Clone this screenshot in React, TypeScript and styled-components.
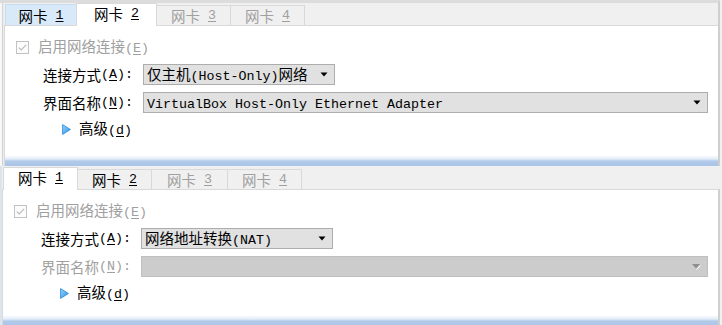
import React from "react";
import styled, { createGlobalStyle, css } from "styled-components";

const Global = createGlobalStyle`
  html, body { margin: 0; padding: 0; background: #f0f0f0; }
  body {
    width: 722px; height: 325px; overflow: hidden;
    font-family: "Noto Sans CJK SC", "Liberation Sans", sans-serif;
    font-size: 14.5px; color: #000;
  }
`;

type TabState = "selected" | "hover" | "normal" | "disabled";

interface TabData { label: string; width: number; state: TabState; }
interface PanelData {
  first: boolean;
  tabs: TabData[];
  mode: string;
  iface: string | null;
  paneHeight: number;
}

const panels: PanelData[] = [
  {
    first: true,
    tabs: [
      { label: "网卡 &1", width: 72, state: "hover" },
      { label: "网卡 &2", width: 81, state: "selected" },
      { label: "网卡 &3", width: 75, state: "disabled" },
      { label: "网卡 &4", width: 75, state: "disabled" },
    ],
    mode: "仅主机(Host-Only)网络",
    iface: "VirtualBox Host-Only Ethernet Adapter",
    paneHeight: 141,
  },
  {
    first: false,
    tabs: [
      { label: "网卡 &1", width: 75, state: "selected" },
      { label: "网卡 &2", width: 75, state: "normal" },
      { label: "网卡 &3", width: 77, state: "disabled" },
      { label: "网卡 &4", width: 75, state: "disabled" },
    ],
    mode: "网络地址转换(NAT)",
    iface: null,
    paneHeight: 137,
  },
];

const Screen = styled.div`
  display: flex;
  flex-direction: column;
  width: 722px;
  height: 325px;
  overflow: hidden;
  background: #f0f0f0;
`;

const Frame = styled.section<{ $first: boolean }>`
  display: flex;
  flex-direction: column;
  flex: none;
  box-sizing: border-box;
  width: 720px;
  ${(p) =>
    p.$first
      ? css`
          border-top: 3px solid #dcdcdc;
          border-right: 2px solid #cfcfcf;
          background: linear-gradient(to right, #f7f7f7 0 2px, #d3d3d3 2px 3px, #ececec 3px 4px, #f0f0f0 4px);
        `
      : css`
          padding-top: 1px;
          background: linear-gradient(to right, #dbe5ef 0 2px, #f0f0f0 2px);
        `}
`;

const TabBar = styled.div<{ $first: boolean }>`
  display: flex;
  align-items: flex-end;
  height: 22px;
  margin-left: ${(p) => (p.$first ? 5 : 3)}px;
`;

const Tab = styled.div<{ $state: TabState; $w: number }>`
  box-sizing: border-box;
  display: flex;
  align-items: center;
  justify-content: center;
  width: ${(p) => p.$w}px;
  height: 20px;
  margin-left: -1px;
  padding-top: 1px;
  border: 1px solid #d9d9d9;
  border-bottom: none;
  background: #f0f0f0;
  color: #000;
  line-height: 18px;
  white-space: pre;
  &:first-child { margin-left: 0; }
  ${(p) =>
    p.$state === "selected" &&
    css`
      position: relative;
      z-index: 1;
      height: 23px;
      margin-bottom: -1px;
      padding-top: 0;
      padding-bottom: 2px;
      background: #fff;
    `}
  ${(p) =>
    p.$state === "hover" &&
    css`
      height: 21px;
      background: #d8eaf9;
      border-color: #c6dcf0;
    `}
  ${(p) => p.$state === "disabled" && css`color: #a0a0a0;`}
`;

const Pane = styled.div<{ $first: boolean; $h: number }>`
  box-sizing: border-box;
  height: ${(p) => p.$h}px;
  flex: none;
  margin-left: ${(p) => (p.$first ? 4 : 2)}px;
  border-top: 1px solid #d9d9d9;
  border-left: 1px solid #d9d9d9;
  border-right: ${(p) => (p.$first ? "none" : "2px solid #d0d0d0")};
  padding-top: 11px;
  display: flex;
  flex-direction: column;
  background: linear-gradient(
    to bottom,
    #ffffff 0,
    #ffffff calc(100% - 11px),
    #e3ecf8 calc(100% - 7px),
    #b3cbea calc(100% - 5px),
    #a9c4e7 100%
  );
`;

const CheckRow = styled.label`
  display: flex;
  align-items: center;
  gap: 9px;
  height: 20px;
  margin-left: 11px;
  color: #a0a0a0;
  line-height: 20px;
`;

const Fields = styled.div`
  display: grid;
  grid-template-columns: 100px 1fr;
  grid-auto-rows: 21px;
  row-gap: 7px;
  margin: 7px 10px 0 38px;
  align-items: center;
`;

const FieldLabel = styled.span<{ $disabled?: boolean }>`
  display: flex;
  align-items: center;
  height: 21px;
  overflow: hidden;
  color: ${(p) => (p.$disabled ? "#a0a0a0" : "#000")};
  white-space: pre;
  line-height: 21px;
`;

const Combo = styled.div<{ $disabled?: boolean; $narrow?: boolean }>`
  box-sizing: border-box;
  display: flex;
  align-items: center;
  justify-content: space-between;
  height: 21px;
  overflow: hidden;
  width: ${(p) => (p.$narrow ? "192px" : "auto")};
  padding: 0 6px 0 3px;
  border: 1px solid ${(p) => (p.$disabled ? "#bfbfbf" : "#adadad")};
  background: ${(p) => (p.$disabled ? "#cccccc" : "#e1e1e1")};
  line-height: 19px;
  white-space: pre;
`;

const AdvRow = styled.div`
  display: flex;
  align-items: center;
  gap: 8px;
  height: 18px;
  margin: 7px 0 0 57px;
  line-height: 18px;
`;

const Latin = styled.span`
  font-family: "Liberation Mono", "DejaVu Sans Mono", monospace;
  font-size: 13.33px;
  white-space: pre;
`;

const Key = styled.span`
  text-decoration: underline;
  text-underline-offset: 2px;
`;

function mnemonic(run: string): React.ReactNode {
  const i = run.indexOf("&");
  if (i < 0) return run;
  return (
    <>
      {run.slice(0, i)}
      <Key>{run.charAt(i + 1)}</Key>
      {run.slice(i + 2)}
    </>
  );
}

function Mixed({ text }: { text: string }) {
  const runs = text.match(/[\x20-\x7e]+|[^\x20-\x7e]+/g) ?? [];
  return (
    <>
      {runs.map((run, i) =>
        /^[\x20-\x7e]/.test(run) ? (
          <Latin key={i}>{mnemonic(run)}</Latin>
        ) : (
          <React.Fragment key={i}>{run}</React.Fragment>
        )
      )}
    </>
  );
}

const CheckBox = () => (
  <svg width="13" height="13" viewBox="0 0 13 13" style={{ flex: "none" }}>
    <rect x="0.5" y="0.5" width="12" height="12" fill="#fcfcfc" stroke="#c2c2c2" />
    <polyline points="2.8,6.6 5.2,9 10.2,3.8" fill="none" stroke="#bcbcbc" strokeWidth="1.2" />
  </svg>
);

const Arrow = ({ disabled }: { disabled?: boolean }) =>
  disabled ? (
    <svg width="9" height="6" viewBox="0 0 9 6" style={{ flex: "none" }}>
      <polygon points="0,0 8,0 4,4.5" fill="#8e8e8e" />
      <polyline points="4.5,5.5 8.5,1.5" stroke="#ffffff" strokeWidth="1" fill="none" />
    </svg>
  ) : (
    <svg width="8" height="5" viewBox="0 0 8 5" style={{ flex: "none" }}>
      <polygon points="0.5,0.5 7.5,0.5 4,4.5" fill="#000" />
    </svg>
  );

const Expand = () => (
  <svg width="9" height="11" viewBox="0 0 9 11" style={{ flex: "none" }}>
    <defs>
      <linearGradient id="exp" x1="0" y1="0" x2="1" y2="1">
        <stop offset="0" stopColor="#9ad6fb" />
        <stop offset="1" stopColor="#2a8fe4" />
      </linearGradient>
    </defs>
    <polygon points="0.6,0.6 8.4,5.5 0.6,10.4" fill="url(#exp)" stroke="#2f92e2" strokeWidth="0.9" />
  </svg>
);

function Panel({ data }: { data: PanelData }) {
  const disabled = data.iface === null;
  return (
    <Frame $first={data.first}>
      <TabBar $first={data.first}>
        {data.tabs.map((t) => (
          <Tab key={t.label} $state={t.state} $w={t.width}>
            <Mixed text={t.label} />
          </Tab>
        ))}
      </TabBar>
      <Pane $first={data.first} $h={data.paneHeight}>
        <CheckRow>
          <CheckBox />
          <span>
            <Mixed text="启用网络连接(&E)" />
          </span>
        </CheckRow>
        <Fields>
          <FieldLabel>
            <Mixed text="连接方式(&A):" />
          </FieldLabel>
          <Combo $narrow>
            <span>
              <Mixed text={data.mode} />
            </span>
            <Arrow />
          </Combo>
          <FieldLabel $disabled={disabled}>
            <Mixed text="界面名称(&N):" />
          </FieldLabel>
          <Combo $disabled={disabled}>
            <span>{data.iface ? <Mixed text={data.iface} /> : null}</span>
            <Arrow disabled={disabled} />
          </Combo>
        </Fields>
        <AdvRow>
          <Expand />
          <span>
            <Mixed text="高级(&d)" />
          </span>
        </AdvRow>
      </Pane>
    </Frame>
  );
}

export default function App() {
  return (
    <>
      <Global />
      <Screen>
        {panels.map((p, i) => (
          <Panel key={i} data={p} />
        ))}
      </Screen>
    </>
  );
}
